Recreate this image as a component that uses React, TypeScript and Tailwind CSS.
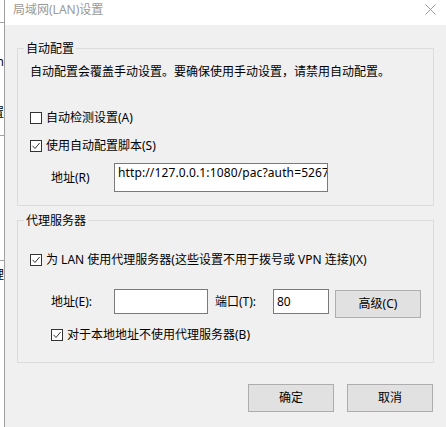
function Check({ checked }: { checked?: boolean }) {
  return (
    <span className="w-[12px] h-[12px] border border-[#333333] bg-white flex items-center justify-center shrink-0">
      {checked && (
        <svg width="10" height="10" viewBox="0 0 10 10">
          <path d="M1.5 4.8 L4 7.5 L8.6 2" stroke="#333333" strokeWidth="1" fill="none" />
        </svg>
      )}
    </span>
  );
}

function CheckRow({ checked, label, className = "" }: { checked?: boolean; label: string; className?: string }) {
  return (
    <div className={`flex items-center gap-[4px] h-[16px] whitespace-nowrap ${className}`}>
      <Check checked={checked} />
      <span>{label}</span>
    </div>
  );
}

function Button({ label, className = "" }: { label: string; className?: string }) {
  return (
    <div
      className={`w-[86px] h-[28px] shrink-0 bg-[#e1e1e1] border border-[#adadad] flex items-center justify-center ${className}`}
    >
      {label}
    </div>
  );
}

export default function App() {
  return (
    <div className="flex w-[446px] h-[427px] overflow-hidden text-[12px] leading-[16px] text-black font-['Noto_Sans','Noto_Sans_CJK_SC',sans-serif]">
      {/* window behind the dialog */}
      <div className="w-[5px] shrink-0 bg-white border-r border-[#a0a0a0] flex flex-col">
        <div className="h-[23px] border-b border-[#a0a0a0]" />
        <div className="h-[113px] border-b border-[#a0a0a0] flex flex-col overflow-hidden">
          <div className="mt-[31px] flex justify-end whitespace-nowrap">Connection</div>
          <div className="mt-[35px] flex justify-end whitespace-nowrap">局域网设置</div>
        </div>
        <div className="h-[125px] border-b border-[#a0a0a0]" />
        <div className="flex-1 flex flex-col overflow-hidden">
          <div className="mt-[6px] flex justify-end whitespace-nowrap">代理</div>
        </div>
      </div>

      {/* dialog */}
      <div className="flex-1 min-w-0 flex flex-col">
        <div className="h-[25px] shrink-0 bg-white flex items-start justify-between pl-[8px] pr-[10px] pt-[2px] text-[#999999]">
          <span>局域网(LAN)设置</span>
          <svg width="11" height="11" viewBox="0 0 11 11" className="mt-[2px]">
            <path d="M0.5 0.5 L10.5 10.5 M10.5 0.5 L0.5 10.5" stroke="#9a9a9a" strokeWidth="1" />
          </svg>
        </div>

        <div className="flex-1 bg-[#f0f0f0] px-[12px] pt-[23px] flex flex-col">
          <div className="border border-[#dcdcdc] flex flex-col">
            <span className="self-start -mt-[8px] ml-[6px] px-[2px] bg-[#f0f0f0]">自动配置</span>
            <div className="pl-[12px] pb-[13px] flex flex-col">
              <div className="mt-[7px] whitespace-nowrap">自动配置会覆盖手动设置。要确保使用手动设置，请禁用自动配置。</div>
              <CheckRow label="自动检测设置(A)" className="mt-[30px]" />
              <CheckRow checked label="使用自动配置脚本(S)" className="mt-[12px]" />
              <div className="mt-[9px] pl-[21px] flex items-center">
                <span className="w-[63px] shrink-0">地址(R)</span>
                <div className="w-[214px] h-[29px] border border-[#7a7a7a] bg-white pl-[3px] pt-[1px] overflow-hidden whitespace-nowrap tracking-[0.12px]">
                  http://127.0.0.1:1080/pac?auth=5267a
                </div>
              </div>
            </div>
          </div>

          <div className="mt-[14px] border border-[#dcdcdc] flex flex-col">
            <span className="self-start -mt-[8px] ml-[6px] px-[2px] bg-[#f0f0f0]">代理服务器</span>
            <div className="pl-[12px] pb-[19px] flex flex-col">
              <CheckRow checked label="为 LAN 使用代理服务器(这些设置不用于拨号或 VPN 连接)(X)" className="mt-[23px]" />
              <div className="mt-[21px] pl-[21px] flex items-start">
                <span className="w-[63px] h-[25px] shrink-0 flex items-center">地址(E):</span>
                <div className="w-[94px] h-[25px] shrink-0 border border-[#7a7a7a] bg-white" />
                <span className="w-[65px] h-[25px] shrink-0 pl-[7px] flex items-center">端口(T):</span>
                <div className="w-[56px] h-[25px] shrink-0 border border-[#7a7a7a] bg-white pl-[3px] flex items-center">
                  80
                </div>
                <Button label="高级(C)" className="ml-[6px] mt-[1px]" />
              </div>
              <CheckRow checked label="对于本地地址不使用代理服务器(B)" className="mt-[9px] ml-[21px]" />
            </div>
          </div>

          <div className="mt-[21px] pr-[1px] flex justify-end gap-[13px]">
            <Button label="确定" />
            <Button label="取消" />
          </div>
        </div>
      </div>
    </div>
  );
}
